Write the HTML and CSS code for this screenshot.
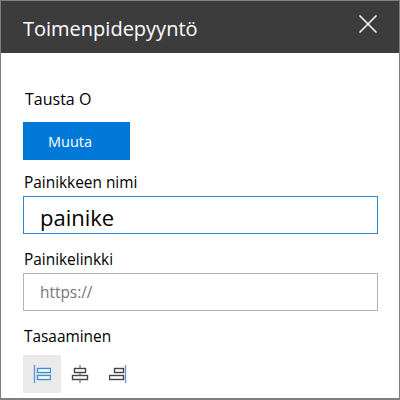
FILE: index.html
```html
<!DOCTYPE html>
<html lang="fi">
<head>
<meta charset="utf-8">
<title>Toimenpidepyyntö</title>
<link rel="stylesheet" href="styles.css">
</head>
<body>
<div class="panel">
  <header class="head">
    <h1 class="title">Toimenpidepyyntö</h1>
    <svg class="close" width="18" height="18" viewBox="0 0 18 18" aria-label="Sulje"><path d="M0.5 0.5 L17.5 17.5 M17.5 0.5 L0.5 17.5" stroke="#fff" stroke-width="1.5" fill="none"/></svg>
  </header>
  <main class="body">
    <div class="bg-label">Tausta O</div>
    <button class="primary">Muuta</button>
    <label class="label first">Painikkeen nimi</label>
    <div class="field active">painike</div>
    <label class="label second">Painikelinkki</label>
    <div class="field placeholder">https://</div>
    <label class="label third">Tasaaminen</label>
    <div class="aligns">
      <div class="align selected">
        <svg width="18" height="18" viewBox="0 0 18 18"><path d="M1.5 0V18" stroke="#6f94dc" stroke-width="1.4" fill="none"/><rect x="4.5" y="3.5" width="13" height="4" fill="#fff" stroke="#3f8fd0" stroke-width="1.4"/><rect x="4.5" y="10.5" width="13" height="4" fill="#fff" stroke="#3f8fd0" stroke-width="1.4"/></svg>
      </div>
      <div class="align">
        <svg width="18" height="18" viewBox="0 0 18 18"><path d="M9 0V18" stroke="#a87a55" stroke-width="1.4" fill="none"/><rect x="3.5" y="3.5" width="11" height="4" fill="#fff" stroke="#444" stroke-width="1.4"/><rect x="1.5" y="10.5" width="15" height="4" fill="#fff" stroke="#444" stroke-width="1.4"/></svg>
      </div>
      <div class="align">
        <svg width="18" height="18" viewBox="0 0 18 18"><path d="M16.5 0V18" stroke="#6f94dc" stroke-width="1.4" fill="none"/><rect x="5.5" y="3.5" width="9" height="4" fill="#fff" stroke="#444" stroke-width="1.4"/><rect x="0.5" y="10.5" width="14" height="4" fill="#fff" stroke="#444" stroke-width="1.4"/></svg>
      </div>
    </div>
  </main>
</div>
</body>
</html>
```
FILE: styles.css
```css
* { box-sizing: border-box; }
html, body { margin: 0; padding: 0; }
body {
  width: 400px;
  height: 400px;
  overflow: hidden;
  background: #fff;
  font-family: "Open Sans", "Liberation Sans", sans-serif;
  color: #000;
}
.panel {
  width: 400px;
  height: 400px;
  border: 1px solid #7f7f7f;
  border-bottom-width: 2px;
  display: flex;
  flex-direction: column;
}
.head {
  height: 52px;
  flex: none;
  background: #3c3c3c;
  display: flex;
  align-items: center;
  justify-content: space-between;
  padding: 0 22px 0 22px;
}
.title {
  margin: 0;
  font-size: 20px;
  font-weight: 400;
  color: #fff;
  line-height: 52px;
  padding-top: 4px;
}
.close { margin-top: -6px; }
.body {
  flex: 1;
  padding: 36px 21px 0 22px;
  display: flex;
  flex-direction: column;
  align-items: flex-start;
}
.bg-label { font-size: 16px; line-height: 20px; padding-left: 2px; }
.label { font-size: 15.4px; line-height: 20px; padding-left: 1px; }
.primary {
  margin-top: 13px;
  width: 107px;
  height: 38px;
  border: 0;
  background: #0078d7;
  color: #fff;
  font: 400 14.5px "Open Sans", "Liberation Sans", sans-serif;
  padding: 0 13px 0 0;
}
.first { margin-top: 13px; }
.second { margin-top: 16px; }
.third { margin-top: 16px; }
.field {
  width: 355px;
  height: 38px;
  margin-top: 3px;
  border: 1px solid #b3b3b3;
  padding-left: 16px;
  display: flex;
  align-items: center;
}
.active {
  border-color: #2b88d8;
  font-size: 22px;
  padding-top: 4px;
  overflow: hidden;
}
.placeholder {
  color: #767676;
  font-size: 15.4px;
}
.aligns { display: flex; margin-top: 8px; }
.align {
  width: 38px;
  height: 38px;
  display: flex;
  align-items: center;
  justify-content: center;
}
.selected { background: #eaeaea; }
```
